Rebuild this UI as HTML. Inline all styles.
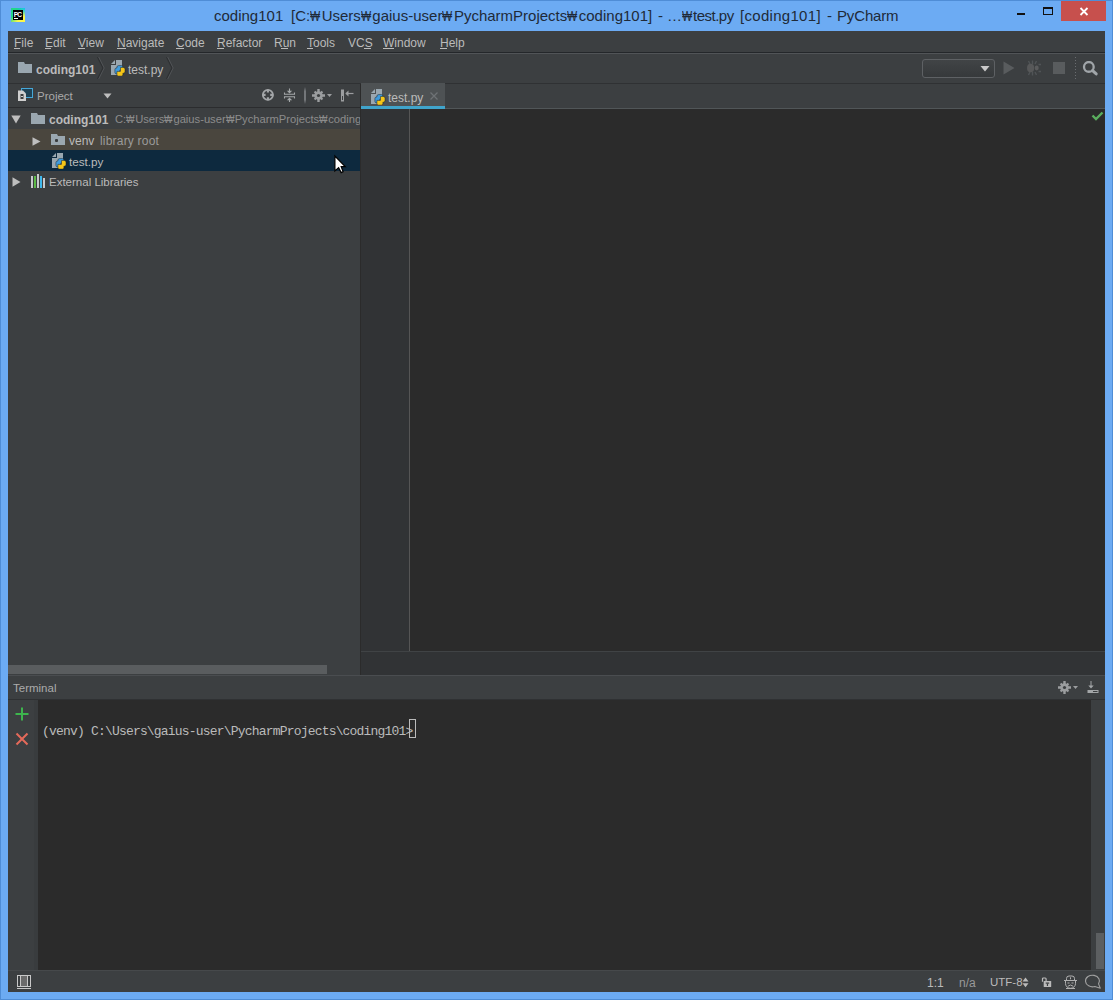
<!DOCTYPE html>
<html><head><meta charset="utf-8">
<style>
*{margin:0;padding:0;box-sizing:border-box}
html,body{width:1113px;height:1000px;overflow:hidden}
body{position:relative;background:#6CABF3;font-family:"Liberation Sans",sans-serif;color:#BBBBBB}
.a{position:absolute}
.t{position:absolute;white-space:nowrap;line-height:1}
.tt{top:8px;font-size:15px;color:#1F2A38}
.w2{display:inline-block;width:9px;transform:scaleX(0.8);transform-origin:0 0}
.w{display:inline-block;width:11.5px;transform:scaleX(0.72);transform-origin:0 0;overflow:visible}
</style></head><body>
<svg width="0" height="0" style="position:absolute">
<defs>
<symbol id="py" viewBox="4 3 15 16">
<path d="M4 7L8 3V7Z" fill="#9AA7B0"/>
<path d="M9 3H15V18H4V8H9Z" fill="#9AA7B0"/>
<g stroke="rgba(20,30,40,.55)" stroke-width=".9">
<path d="M11.5 8.6H14.3A1.6 1.6 0 0 1 15.9 10.2V13.3H12.6V16.9H9.5A1.6 1.6 0 0 1 7.9 15.3V12.6A1.6 1.6 0 0 1 9.5 11H9.9V10.2A1.6 1.6 0 0 1 11.5 8.6Z" fill="#3F9BDC"/>
<path d="M15.4 10.5H16.4A1.6 1.6 0 0 1 18 12.1V14.6A1.6 1.6 0 0 1 16.4 16.2H15.9V17.5A1.6 1.6 0 0 1 14.3 19.1H11.5A1.6 1.6 0 0 1 9.9 17.5V14.4H13.5V10.5Z" fill="#F5C518"/>
</g>
</symbol>
<symbol id="folder" viewBox="0 0 14 11">
<path d="M0 0H6L7 2H14V11H0Z" fill="#9AA7B0"/>
</symbol>
</defs></svg>
<!-- window border -->
<div class="a" style="left:0;top:0;width:1113px;height:1px;background:#4F8DD6"></div>
<div class="a" style="left:0;top:0;width:1px;height:1000px;background:#4F8DD6"></div>
<div class="a" style="left:1112px;top:0;width:1px;height:1000px;background:#4F8DD6"></div>
<div class="a" style="left:0;top:999px;width:1113px;height:1px;background:#4F8DD6"></div>

<!-- title bar -->
<div class="a" style="left:11px;top:8px;width:14px;height:14px;background:radial-gradient(circle at 100% 0%,#07C3F2 0,rgba(7,195,242,0) 45%),linear-gradient(135deg,#21D789 0%,#21D789 35%,#FCF84A 72%,#FCF84A 100%)"></div>
<div class="a" style="left:13px;top:10px;width:10px;height:10px;background:#000;overflow:hidden"><div class="t" style="left:0.8px;top:0.6px;font-size:6.6px;font-weight:bold;color:#fff;letter-spacing:-0.9px;transform:scaleY(1.15);transform-origin:top left">PC</div></div>
<div class="a" style="left:14px;top:18px;width:4px;height:1px;background:#fff"></div>
<div class="t tt" style="left:214px">coding101</div>
<div class="t tt" style="left:291px">[C:<span class="w">₩</span>Users<span class="w">₩</span>gaius-user<span class="w">₩</span>PycharmProjects<span class="w">₩</span>coding101]</div>
<div class="t tt" style="left:658px">-</div>
<div class="t tt" style="left:667px;letter-spacing:-0.5px">…<span class="w">₩</span>test.py</div>
<div class="t tt" style="left:740px;letter-spacing:0.3px">[coding101]</div>
<div class="t tt" style="left:827px">-</div>
<div class="t tt" style="left:837px;letter-spacing:-0.15px">PyCharm</div>

<!-- min/max/close -->
<div class="a" style="left:1017px;top:13px;width:8px;height:2px;background:#111"></div>
<div class="a" style="left:1043px;top:7px;width:10px;height:8px;border:1px solid #111;border-top-width:2px"></div>
<div class="a" style="left:1061px;top:1px;width:45px;height:20px;background:#C7504D"></div>
<svg class="a" style="left:1079px;top:7px" width="10" height="9" viewBox="0 0 10 9"><path d="M1.5 1L8.5 8M8.5 1L1.5 8" stroke="#fff" stroke-width="1.8"/></svg>

<!-- content -->
<div class="a" style="left:8px;top:31px;width:1097px;height:961px;background:#3C3F41"></div>
<!-- menu bar -->
<div class="a" style="left:8px;top:52px;width:1097px;height:1px;background:#24272A"></div>
<div class="a" style="left:8px;top:53px;width:1097px;height:1px;background:#515457"></div>
<div class="t" style="left:14px;top:37px;font-size:12px">File</div>
<div class="t" style="left:45px;top:37px;font-size:12px">Edit</div>
<div class="t" style="left:78px;top:37px;font-size:12px">View</div>
<div class="t" style="left:117px;top:37px;font-size:12px">Navigate</div>
<div class="t" style="left:176px;top:37px;font-size:12px">Code</div>
<div class="t" style="left:217px;top:37px;font-size:12px">Refactor</div>
<div class="t" style="left:274px;top:37px;font-size:12px">Run</div>
<div class="t" style="left:307px;top:37px;font-size:12px">Tools</div>
<div class="t" style="left:348px;top:37px;font-size:12px">VCS</div>
<div class="t" style="left:383px;top:37px;font-size:12px">Window</div>
<div class="t" style="left:440px;top:37px;font-size:12px">Help</div>
<div class="a" style="left:14px;top:48px;width:6px;height:1px;background:#BBBBBB"></div>
<div class="a" style="left:45px;top:48px;width:6px;height:1px;background:#BBBBBB"></div>
<div class="a" style="left:78px;top:48px;width:7px;height:1px;background:#BBBBBB"></div>
<div class="a" style="left:117px;top:48px;width:9px;height:1px;background:#BBBBBB"></div>
<div class="a" style="left:176px;top:48px;width:8px;height:1px;background:#BBBBBB"></div>
<div class="a" style="left:217px;top:48px;width:7px;height:1px;background:#BBBBBB"></div>
<div class="a" style="left:281px;top:48px;width:7px;height:1px;background:#BBBBBB"></div>
<div class="a" style="left:307px;top:48px;width:6px;height:1px;background:#BBBBBB"></div>
<div class="a" style="left:364px;top:48px;width:7px;height:1px;background:#BBBBBB"></div>
<div class="a" style="left:383px;top:48px;width:11px;height:1px;background:#BBBBBB"></div>
<div class="a" style="left:440px;top:48px;width:7px;height:1px;background:#BBBBBB"></div>
<!-- breadcrumb toolbar -->
<div class="a" style="left:8px;top:83px;width:1097px;height:1px;background:#2F3133"></div>
<div class="t" style="left:36px;top:63.5px;font-size:12px;font-weight:bold">coding101</div>
<div class="t" style="left:128px;top:63.5px;font-size:12px">test.py</div>
<svg class="a" style="left:18px;top:62px" width="14" height="11"><use href="#folder"/></svg>
<svg class="a" style="left:97px;top:57px" width="8" height="22" viewBox="0 0 8 22"><path d="M0.5 0L6 11L0.5 22" stroke="#2E3032" stroke-width="1.2" fill="none"/><path d="M1.7 0L7.2 11L1.7 22" stroke="#505356" stroke-width="1" fill="none"/></svg>
<svg class="a" style="left:111px;top:60px" width="15" height="16"><use href="#py"/></svg>
<svg class="a" style="left:166px;top:57px" width="8" height="22" viewBox="0 0 8 22"><path d="M0.5 0L6 11L0.5 22" stroke="#2E3032" stroke-width="1.2" fill="none"/><path d="M1.7 0L7.2 11L1.7 22" stroke="#505356" stroke-width="1" fill="none"/></svg>
<!-- run toolbar -->
<div class="a" style="left:922px;top:59px;width:73px;height:19px;border:1px solid #5E6164;border-radius:3px;background:linear-gradient(#414446,#36393B)"></div>
<svg class="a" style="left:980px;top:66px" width="10" height="6" viewBox="0 0 10 6"><path d="M0.5 0H9.5L5 5.5Z" fill="#C9C9C9"/></svg>
<svg class="a" style="left:1003px;top:61px" width="12" height="14" viewBox="0 0 12 14"><path d="M0.5 0.5L11.5 7L0.5 13.5Z" fill="#595C5E"/></svg>
<svg class="a" style="left:1022px;top:56px" width="24" height="24" viewBox="0 0 24 24"><g stroke="#505457" stroke-width="1.4"><path d="M6.5 5L8 8M10.5 4.5V8M14.5 5L13 8M6.5 19L8 16M10.5 19.5V16M14.5 19L13 16M16.5 8.5H19M16.5 15.5H19"/></g><ellipse cx="8.6" cy="12" rx="3.6" ry="4.3" fill="#575859"/><ellipse cx="14.7" cy="12" rx="2" ry="2.4" fill="#5B5C5D"/></svg>
<div class="a" style="left:1053px;top:62px;width:12px;height:12px;background:#595C5E"></div>
<div class="a" style="left:1075px;top:57px;width:1px;height:24px;background:repeating-linear-gradient(#6A6D70 0 1px,transparent 1px 3px)"></div>
<svg class="a" style="left:1082px;top:61px" width="17" height="16" viewBox="0 0 17 16"><circle cx="6.85" cy="5.9" r="4.85" stroke="#A0A5A9" stroke-width="2.3" fill="none"/><path d="M10.6 9.6L14.2 12.9" stroke="#A0A5A9" stroke-width="3" stroke-linecap="round"/></svg>
<!-- project panel header -->
<div class="a" style="left:8px;top:107px;width:352px;height:1px;background:#2B2C2E"></div>
<div class="t" style="left:37px;top:91px;font-size:11.5px;color:#A9A9A9">Project</div>
<svg class="a" style="left:17px;top:88px" width="16" height="14" viewBox="0 0 16 14"><rect x="4.5" y="0.5" width="11" height="9" fill="#1F4255" stroke="#46A7D8"/><path d="M1 2.5H6L9 5.5V13H1Z" fill="#CFCFCF"/><rect x="3.5" y="6" width="3" height="5" fill="#3C3F41"/><rect x="4" y="8" width="2" height="1" fill="#CFCFCF"/></svg>
<svg class="a" style="left:103px;top:93px" width="9" height="6" viewBox="0 0 9 6"><path d="M0.5 0.5H8.5L4.5 5.5Z" fill="#BEBEBE"/></svg>
<svg class="a" style="left:261px;top:88px" width="14" height="14" viewBox="0 0 14 14"><circle cx="6.9" cy="6.9" r="5.05" stroke="#A3A6A8" stroke-width="1.8" fill="none"/><path d="M6.9 1.5V4.6M6.9 9.2V12.3M1.5 6.9H4.6M9.2 6.9H12.3" stroke="#A3A6A8" stroke-width="2.1"/></svg>
<svg class="a" style="left:283px;top:88px" width="14" height="15" viewBox="0 0 14 15"><g stroke="#A3A6A8" fill="none" stroke-width="1.1"><path d="M1.5 4.5V6.3H11.5V4.5M1.5 10.5V8.7H11.5V10.5M6.5 0.5V3.5M6.5 11.5V14"/></g><path d="M3.8 2.8H9.2L6.5 5.6ZM3.8 12.2H9.2L6.5 9.4Z" fill="#A3A6A8"/></svg>
<div class="a" style="left:304px;top:87px;width:2px;height:17px;background:linear-gradient(rgba(107,110,112,0),#74777A 25%,#74777A 75%,rgba(107,110,112,0))"></div>
<svg class="a" style="left:312px;top:89px" width="21" height="13" viewBox="0 0 21 13"><g fill="#9B9D9F"><circle cx="6.5" cy="6.5" r="4.3"/><path d="M5.3 0H7.7V13H5.3ZM0 5.3H13V7.7H0Z"/><path d="M1.8 3.3L3.3 1.8L11.2 9.7L9.7 11.2ZM9.7 1.8L11.2 3.3L3.3 11.2L1.8 9.7Z"/><path d="M15 5H20L17.5 8Z"/></g><circle cx="6.5" cy="6.5" r="1.6" fill="#3C3F41"/></svg>
<svg class="a" style="left:340px;top:89px" width="14" height="13" viewBox="0 0 14 13"><rect x="1" y="0.5" width="3" height="12" fill="#9B9D9F"/><rect x="2" y="7" width="1" height="4" fill="#3C3F41"/><path d="M6 4.5H13.5" stroke="#9B9D9F" stroke-width="1.2"/><path d="M5.3 4.5L8.5 1.5V7.5Z" fill="#9B9D9F"/></svg>
<!-- tree -->
<div class="a" style="left:8px;top:129px;width:352px;height:21px;background:#4A463E"></div>
<div class="a" style="left:8px;top:150px;width:352px;height:21px;background:#0D293E"></div>
<div class="t" style="left:49px;top:114px;font-size:12px;font-weight:bold">coding101</div>
<div class="a" style="left:115px;top:108px;width:245px;height:21px;overflow:hidden"><div class="t" style="left:0;top:6px;font-size:11.2px;color:#8C8C8C">C:<span class="w2">₩</span>Users<span class="w2">₩</span>gaius-user<span class="w2">₩</span>PycharmProjects<span class="w2">₩</span>coding101</div></div>
<div class="t" style="left:69px;top:135px;font-size:12px">venv</div>
<div class="t" style="left:100px;top:135px;font-size:12px;letter-spacing:0.2px;color:#9A9A9A">library root</div>
<div class="t" style="left:69px;top:156px;font-size:11.7px">test.py</div>
<div class="t" style="left:49px;top:177px;font-size:11.5px">External Libraries</div>
<svg class="a" style="left:11px;top:115px" width="10" height="9" viewBox="0 0 10 9"><path d="M0.3 0.5H9.7L5 8.5Z" fill="#BEBEBE"/></svg>
<svg class="a" style="left:31px;top:113px" width="14" height="11"><use href="#folder"/></svg>
<svg class="a" style="left:32px;top:137px" width="9" height="9" viewBox="0 0 9 9"><path d="M0.5 0.3V8.7L8.5 4.5Z" fill="#BEBEBE"/></svg>
<svg class="a" style="left:51px;top:134px" width="14" height="11"><use href="#folder"/></svg>
<div class="a" style="left:55px;top:139px;width:3px;height:3px;border-radius:1px;background:#3A3D3F"></div>
<svg class="a" style="left:52px;top:153px" width="15" height="16"><use href="#py"/></svg>
<svg class="a" style="left:12px;top:177px" width="9" height="10" viewBox="0 0 9 10"><path d="M0.5 0.3V9.7L8.5 5Z" fill="#BEBEBE"/></svg>
<div class="a" style="left:31px;top:176px;width:2px;height:12px;background:#C7C9CC"></div>
<div class="a" style="left:34px;top:176px;width:2px;height:12px;background:#5CB847"></div>
<div class="a" style="left:37px;top:174px;width:2px;height:14px;background:#C7C9CC"></div>
<div class="a" style="left:40px;top:176px;width:2px;height:12px;background:#3FB8EC"></div>
<div class="a" style="left:43px;top:178px;width:2px;height:10px;background:#C7C9CC"></div>
<!-- project hscroll -->
<div class="a" style="left:8px;top:665px;width:319px;height:9px;background:#5A5D5F"></div>
<!-- divider -->
<div class="a" style="left:360px;top:84px;width:1px;height:591px;background:#2B2B2B"></div>
<!-- tabs -->
<div class="a" style="left:361px;top:108px;width:744px;height:1px;background:#515658"></div>
<div class="a" style="left:361px;top:83px;width:84px;height:23px;background:#4E5254"></div>
<div class="a" style="left:361px;top:106px;width:84px;height:3px;background:#40A4CB"></div>
<div class="t" style="left:388px;top:92px;font-size:12px">test.py</div>
<svg class="a" style="left:371px;top:89px" width="15" height="16"><use href="#py"/></svg>
<svg class="a" style="left:430px;top:92px" width="8" height="8" viewBox="0 0 8 8"><path d="M0.5 0.5L7.5 7.5M7.5 0.5L0.5 7.5" stroke="#6E7275" stroke-width="1.3"/></svg>
<!-- editor -->
<div class="a" style="left:361px;top:109px;width:744px;height:542px;background:#2B2B2B"></div>
<div class="a" style="left:361px;top:109px;width:48px;height:542px;background:#313335"></div>
<div class="a" style="left:409px;top:109px;width:1px;height:542px;background:#555555"></div>
<div class="a" style="left:361px;top:651px;width:744px;height:1px;background:#404345"></div>
<div class="a" style="left:361px;top:652px;width:744px;height:23px;background:#313335"></div>
<svg class="a" style="left:1091px;top:111px" width="13" height="10" viewBox="0 0 13 10"><path d="M1.5 4.5L5 8L11.5 1.5" stroke="#5AAE5E" stroke-width="2.4" fill="none"/></svg>
<!-- separator -->
<div class="a" style="left:8px;top:675px;width:1097px;height:1px;background:#4A4D50"></div>
<!-- terminal header -->
<div class="t" style="left:13px;top:683px;font-size:11.5px;color:#ABABAB">Terminal</div>
<svg class="a" style="left:1058px;top:681px" width="21" height="13" viewBox="0 0 21 13"><g fill="#9B9D9F"><circle cx="6.5" cy="6.5" r="4.3"/><path d="M5.3 0H7.7V13H5.3ZM0 5.3H13V7.7H0Z"/><path d="M1.8 3.3L3.3 1.8L11.2 9.7L9.7 11.2ZM9.7 1.8L11.2 3.3L3.3 11.2L1.8 9.7Z"/><path d="M15 5H20L17.5 8Z"/></g><circle cx="6.5" cy="6.5" r="1.6" fill="#3C3F41"/></svg>
<svg class="a" style="left:1087px;top:681px" width="12" height="13" viewBox="0 0 12 13"><path d="M4 0V5.5" stroke="#A3A6A8" stroke-width="1"/><path d="M1.3 4.5L4 7.6L6.7 4.5Z" fill="#A3A6A8"/><rect x="0.5" y="9" width="11" height="3" fill="#A3A6A8"/><rect x="6" y="10" width="4.5" height="1" fill="#3C3F41"/></svg>
<div class="a" style="left:8px;top:699px;width:1097px;height:1px;background:#2F3133"></div>
<!-- terminal body -->
<div class="a" style="left:38px;top:700px;width:1053px;height:270px;background:#2B2B2B"></div>
<div class="t" style="left:42px;top:725px;font-family:'Liberation Mono',monospace;font-size:13px;letter-spacing:-0.81px;color:#BBBBBB">(venv) C:\Users\gaius-user\PycharmProjects\coding101&gt;</div>
<div class="a" style="left:409px;top:719px;width:7px;height:19px;border:1px solid #BBBBBB"></div>
<svg class="a" style="left:15px;top:707px" width="14" height="14" viewBox="0 0 14 14"><path d="M7 0.5V13.5M0.5 7H13.5" stroke="#3DB54D" stroke-width="2"/></svg>
<svg class="a" style="left:15px;top:732px" width="14" height="14" viewBox="0 0 14 14"><path d="M1.5 1.5L12.5 12.5M12.5 1.5L1.5 12.5" stroke="#E46A5A" stroke-width="2"/></svg>
<div class="a" style="left:1096px;top:933px;width:8px;height:36px;background:#5C5F61"></div>
<!-- status bar -->
<div class="a" style="left:8px;top:970px;width:1097px;height:1px;background:#46494B"></div>
<div class="a" style="left:34px;top:700px;width:4px;height:270px;background:#393C3E"></div>
<div class="t" style="left:927px;top:977px;font-size:12px">1:1</div>
<div class="t" style="left:959px;top:977px;font-size:12px;color:#9A9A9A">n/a</div>
<div class="t" style="left:990px;top:977px;font-size:11.5px">UTF-8</div>


<!-- status icons -->
<svg class="a" style="left:17px;top:975px" width="15" height="15" viewBox="0 0 15 15"><rect x="4" y="1" width="7" height="10" fill="#6B6B6B"/><rect x="0.5" y="0.5" width="13" height="11" fill="none" stroke="#C8C8C8" stroke-width="1"/><path d="M3.5 0.5V11.5M10.5 0.5V11.5" stroke="#C8C8C8"/><path d="M0 13.5H14" stroke="#C8C8C8"/></svg>
<svg class="a" style="left:1022px;top:977px" width="7" height="11" viewBox="0 0 7 11"><path d="M0.5 4.5L3.5 0.5L6.5 4.5ZM0.5 6.2L3.5 10.2L6.5 6.2Z" fill="#BBBBBB"/></svg>
<svg class="a" style="left:1041px;top:977px" width="11" height="11" viewBox="0 0 11 11"><path d="M1.5 4.8V1.9Q1.5 1 2.4 1H4.2Q5.1 1 5.1 1.9V4.2" stroke="#BBBBBB" stroke-width="1.2" fill="none"/><rect x="2.7" y="4" width="7.5" height="6" rx="0.5" fill="#BBBBBB"/><rect x="4.7" y="5.5" width="3.5" height="1.2" fill="#3C3F41"/><rect x="5.85" y="6.5" width="1.2" height="2.5" fill="#3C3F41"/></svg>
<svg class="a" style="left:1063px;top:975px" width="15" height="15" viewBox="0 0 15 15"><g stroke="#B0B0B0" stroke-width="1" fill="none"><path d="M3.5 5.5V3.5A2.5 2.5 0 0 1 6 1H9A2.5 2.5 0 0 1 11.5 3.5V5.5"/><path d="M1 5.5H14"/><path d="M2.5 6V8.5A5 4.8 0 0 0 12.5 8.5V6"/><path d="M4.5 8H6.5M8.5 8H10.5"/><path d="M5 11.2Q7.5 8.8 10 11.2"/><path d="M3 13.5H12"/></g><rect x="7" y="2.3" width="1" height="2" fill="#B0B0B0"/></svg>
<svg class="a" style="left:1084px;top:974px" width="18" height="16" viewBox="0 0 18 16"><path d="M14.56 9.9A7 5.8 0 1 0 10.9 12.45L16.3 14.2Z" stroke="#A0A0A0" stroke-width="1.1" fill="none" stroke-linejoin="round"/></svg>
<!-- cursor -->
<svg class="a" style="left:333px;top:154px" width="14" height="21" viewBox="0 0 14 21"><path d="M1.9 2.1V16.9L5.6 13.6L8.2 18.6L10.1 17.7L8.2 12.7H12.2Z" fill="#fff" stroke="#000" stroke-width="1.2" stroke-linejoin="miter"/></svg>
</body></html>
